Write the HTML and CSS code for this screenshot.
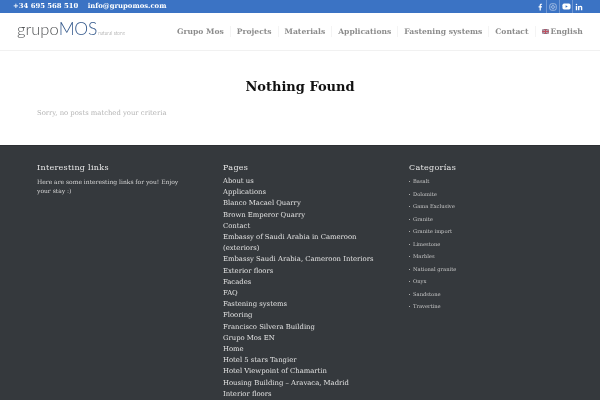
FILE: index.html
```html
<!DOCTYPE html>
<html lang="en">
<head>
<meta charset="utf-8">
<title>Nothing Found</title>
<link rel="stylesheet" href="styles.css">
</head>
<body>
<div class="topbar">
  <div class="contact"><span>+34 695 568 510</span><span>info@grupomos.com</span></div>
  <div class="social">
    <a class="soc"><svg viewBox="0 0 10 10" width="8" height="8"><path d="M6 9.500V5.600h1.300l.2-1.500H6v-1c0-.5.2-.8.8-.8h.8V.9C7.400.9 7 .8 6.500.8 5.300.8 4.500 1.500 4.500 2.900v1.200H3.200v1.500h1.300v3.900z" fill="#fff"/></svg></a>
    <a class="soc"><svg viewBox="0 0 10 10" width="8" height="8"><rect x="1" y="1" width="8" height="8" rx="2.200" fill="none" stroke="#c5d5ee" stroke-width=".9"/><circle cx="5" cy="5" r="1.800" fill="none" stroke="#c5d5ee" stroke-width=".9"/></svg></a>
    <a class="soc"><svg viewBox="0 0 10 10" width="9" height="9"><rect x=".5" y="1.800" width="9" height="6.400" rx="1.800" fill="#fff"/><path d="M4 3.600v2.800L6.400 5z" fill="#3b73c4"/></svg></a>
    <a class="soc"><svg viewBox="0 0 10 10" width="8" height="8"><path d="M1 3.600h1.700V9H1zM1.850 1a.95.95 0 1 1 0 1.900.95.95 0 0 1 0-1.900zM3.800 3.600h1.600v.750c.3-.5.9-.9 1.700-.9 1.500 0 2 .9 2 2.400V9H7.400V6.200c0-.7-.1-1.300-.9-1.300s-1 .6-1 1.300V9H3.800z" fill="#fff"/></svg></a>
  </div>
</div>
<header class="header">
  <a class="logo"><span class="logo-grupo">grupo</span><span class="logo-mos">MOS</span><span class="logo-tag">natural stone</span></a>
  <nav class="nav">
    <a>Grupo Mos</a><a>Projects</a><a>Materials</a><a>Applications</a><a>Fastening systems</a><a>Contact</a>
    <a class="lang"><svg class="flag" viewBox="0 0 8 6" width="7" height="5"><rect width="8" height="6" fill="#8c6d80"/><path d="M0 0l8 6M8 0L0 6" stroke="#e9dfe4" stroke-width=".8"/><path d="M4 0v6M0 3h8" stroke="#c05060" stroke-width="1.200"/></svg>English</a>
  </nav>
</header>
<main class="main">
  <h1>Nothing Found</h1>
  <p>Sorry, no posts matched your criteria</p>
</main>
<footer class="footer">
  <section>
    <h3>Interesting links</h3>
    <p class="intro">Here are some interesting links for you! Enjoy your stay :)</p>
  </section>
  <section>
    <h3>Pages</h3>
    <ul class="pages">
      <li>About us</li>
      <li>Applications</li>
      <li>Blanco Macael Quarry</li>
      <li>Brown Emperor Quarry</li>
      <li>Contact</li>
      <li>Embassy of Saudi Arabia in Cameroon (exteriors)</li>
      <li>Embassy Saudi Arabia, Cameroon Interiors</li>
      <li>Exterior floors</li>
      <li>Facades</li>
      <li>FAQ</li>
      <li>Fastening systems</li>
      <li>Flooring</li>
      <li>Francisco Silvera Building</li>
      <li>Grupo Mos EN</li>
      <li>Home</li>
      <li>Hotel 5 stars Tangier</li>
      <li>Hotel Viewpoint of Chamartin</li>
      <li>Housing Building – Aravaca, Madrid</li>
      <li>Interior floors</li>
    </ul>
  </section>
  <section>
    <h3>Categorías</h3>
    <ul class="cats">
      <li>Basalt</li>
      <li>Dolomite</li>
      <li>Gama Exclusive</li>
      <li>Granite</li>
      <li>Granite import</li>
      <li>Limestone</li>
      <li>Marbles</li>
      <li>National granite</li>
      <li>Onyx</li>
      <li>Sandstone</li>
      <li>Travertine</li>
    </ul>
  </section>
</footer>
</body>
</html>
```
FILE: styles.css
```css
* { box-sizing: border-box; }
html, body { margin: 0; padding: 0; height: 400px; overflow: hidden; }
body { font-family: "DejaVu Serif", serif; background: #fff; color: #333; }
a { color: inherit; text-decoration: none; }

.topbar { height: 13px; background: #3b73c4; color: #fff; display: flex; justify-content: space-between; align-items: center; padding: 0 15px 0 13px; }
.contact { display: flex; gap: 9.500px; font-size: 6.850px; font-weight: 700; line-height: 13px; will-change: transform; }
.social { display: flex; height: 13px; }
.soc { width: 13px; height: 13px; display: flex; align-items: center; justify-content: center; border-left: 1px solid #6f97d3; }
.soc:first-child { border-left: 0; }

.header { height: 38px; border-bottom: 1px solid #f1f1f1; display: flex; justify-content: space-between; align-items: center; padding: 0 17px; }
.logo { display: flex; align-items: baseline; font-family: Lato, sans-serif; font-weight: 300; line-height: 20px; white-space: nowrap; margin-top: -1px; will-change: transform; }
.logo-grupo { font-size: 16.500px; color: #4f5153; }
.logo-mos { font-size: 17.500px; color: #34598c; letter-spacing: -.2px; }
.logo-tag { font-size: 4.800px; color: #8a8a8a; margin-left: 1px; }
.nav { display: flex; align-items: center; font-size: 7.600px; font-weight: 700; color: #8c8c8c; line-height: 11px; will-change: transform; }
.nav a { padding: 0 6px; border-left: 1px solid #f4f4f4; white-space: nowrap; }
.nav a:first-child { border-left: 0; }
.lang { display: flex; align-items: center; gap: 2px; padding-right: 0 !important; }
.flag { display: block; }

.main { height: 94px; padding: 27px 37px 0; will-change: transform; }
.main h1 { margin: 0; text-align: center; font-size: 13px; font-weight: 700; line-height: 17px; color: #111; }
.main p { margin: 12px 0 0; font-size: 6.850px; line-height: 12px; color: #b4b4b4; }

.footer { height: 255px; overflow: hidden; background: #35393d; border-top: 1px solid #2c2f33; color: #e6e6e6; display: grid; grid-template-columns: 186px 186px 1fr; padding: 16px 37px 0; }
.footer section { will-change: transform; }
.footer h3 { margin: 0; font-size: 8px; font-weight: 400; line-height: 12px; letter-spacing: .3px; color: #e8e8e8; }
.intro { margin: 4px 0 0; width: 150px; font-size: 6px; line-height: 8.700px; color: #d5d5d5; }
.footer ul { list-style: none; margin: 0; padding: 0; }
.pages { margin-top: 2px !important; width: 160px; font-size: 6.850px; line-height: 11.200px; color: #e2e2e2; }
.cats { margin-top: 1px !important; font-size: 5.200px; line-height: 12.500px; color: #c8c8c8; }
.cats li { padding-left: 4px; position: relative; }
.cats li::before { content: ""; position: absolute; left: 0; top: 6px; width: 1px; height: 1px; background: #aaa; }
```
